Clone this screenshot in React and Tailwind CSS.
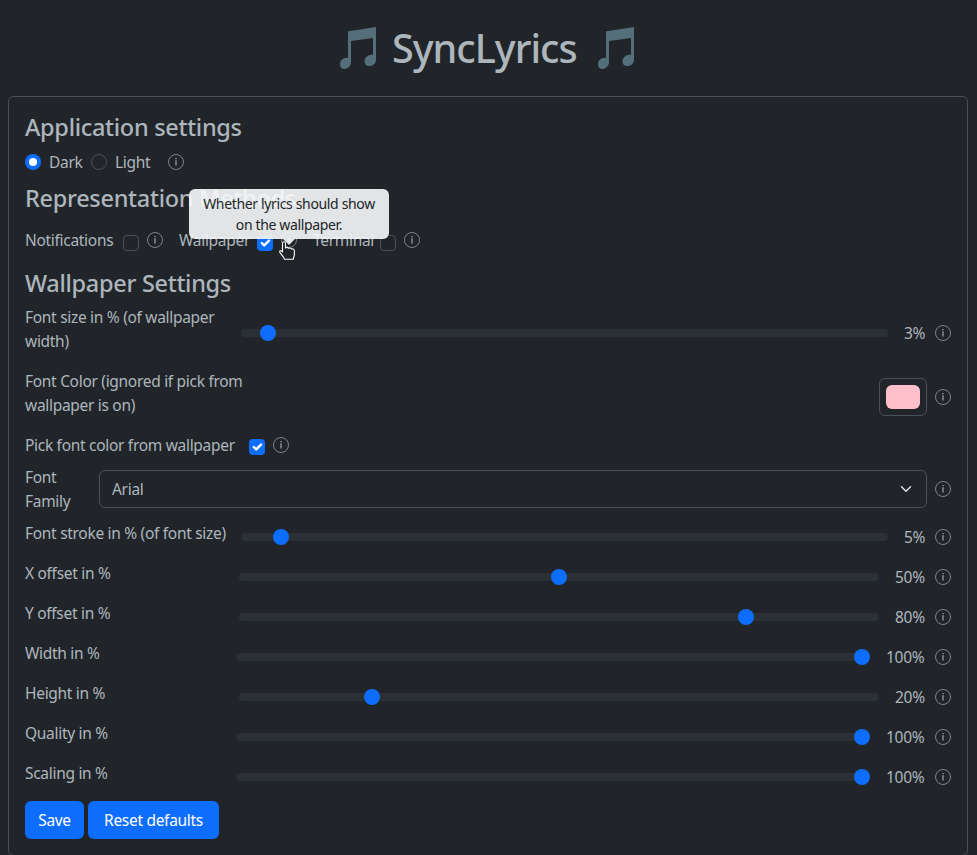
const NOTE = "M7 4.5 L36 0 V32.5 C36 37 32 39.5 29 39 C26 39 24.5 37 24.5 34.5 C24.5 30 29 27 33 28 V11 L11 14 V35 C11 39.5 7 42 4.5 42 C1.5 42 0 40 0 37.5 C0 33 4 30 8 31 V4.5 Z";

function Note({ className = "" }) {
  return (
    <svg className={`shrink-0 ${className}`} width="36" height="42" viewBox="0 0 36 42" fill="#546e7a">
      <path d={NOTE} />
    </svg>
  );
}

function Info({ className = "" }) {
  return (
    <svg className={`size-4 shrink-0 ${className}`} viewBox="0 0 16 16" fill="none" stroke="#adb5bd">
      <circle cx="8" cy="8" r="7.5" strokeWidth="0.65" />
      <path d="M8 6.2V11.6" strokeWidth="1.1" />
      <path d="M8 4.1V5.3" strokeWidth="1.1" />
    </svg>
  );
}

function Check({ on = false, className = "" }) {
  return on ? (
    <span className={`size-4 shrink-0 rounded bg-[#0d6efd] ${className}`}>
      <svg viewBox="0 0 20 20" className="size-4" fill="none" stroke="#fff" strokeWidth="3" strokeLinecap="round" strokeLinejoin="round">
        <path d="m6 10 3 3 6-6" />
      </svg>
    </span>
  ) : (
    <span className={`size-4 shrink-0 rounded border border-[#495057] ${className}`} />
  );
}

function Heading({ children, className = "" }) {
  return <h4 className={`h-[29px] whitespace-nowrap text-[23.5px] leading-[29px] font-medium ${className}`}>{children}</h4>;
}

function Slider({ percent }) {
  return (
    <div className="flex h-4 min-w-0 flex-1 items-center rounded-full">
      <div className="flex h-2 w-full items-center rounded-full bg-[#2b3035] pr-4">
        <div className="h-4 w-full">
          <div className="size-4 rounded-full bg-[#0d6efd]" style={{ marginLeft: `${percent}%` }} />
        </div>
      </div>
    </div>
  );
}

function SliderRow({ label, percent, labelWidth, valueWidth, track, tall = false }) {
  return (
    <div className={`mb-2 flex items-center ${tall ? "h-14" : "h-8"}`}>
      <label className={`self-start whitespace-pre ${labelWidth} ${track}`}>{label}</label>
      <Slider percent={percent} />
      <span className={`ml-4 whitespace-nowrap tracking-[-0.3px] ${valueWidth}`}>{percent}%</span>
      <Info className="ml-2" />
    </div>
  );
}

function Tooltip() {
  return (
    <div className="absolute bottom-[9px] left-1/2 z-10 flex w-[200px] -translate-x-1/2 flex-col items-center opacity-90">
      <div className="h-[50px] w-full rounded-md bg-[#f8f9fa] py-1 text-center text-[14px] leading-[21px] whitespace-nowrap text-[#212529]">
        <div className="tracking-[-0.35px]">Whether lyrics should show</div>
        <div className="tracking-[-0.35px]">on the wallpaper.</div>
      </div>
      <div className="-mb-[6px] h-[6px] w-3 bg-[#f8f9fa] [clip-path:polygon(0_0,100%_0,50%_100%)]" />
    </div>
  );
}

function Pointer() {
  return (
    <svg className="absolute top-[9px] left-[-2px] z-20" width="16" height="19" viewBox="0 0 16 19">
      <path
        d="M3.5 11V2.2C3.5 .2 6.5 .2 6.5 2.2V7C7.5 6 9 6.3 9.5 7.3C10.5 6.6 12 7 12.4 8C14 7.5 15.4 8.2 15.4 9.8V13.5C15.4 15 14.4 15.8 14.4 18.3H5.5C5 16 2.5 14 1 11.6C0 9.8 2 9 3.5 11Z"
        fill="#212529" stroke="#fff" strokeWidth="1.1" strokeLinejoin="round"
      />
    </svg>
  );
}

export default function App() {
  return (
    <div className="h-screen overflow-hidden bg-[#212529] px-2 pt-6 font-['Noto_Sans','Open_Sans',sans-serif] text-[15.5px] leading-6 text-[#adb5bd]">
      <h1 className="mb-6 flex h-12 w-[960px] items-center pl-[332px] text-[39.5px] leading-[48px] font-medium">
        <Note />
        <span className="ml-[16px] w-[206px] whitespace-nowrap tracking-[-1px]">SyncLyrics</span>
        <Note />
      </h1>

      <div className="h-[760px] w-[960px] rounded-md border border-[#495057] p-4">
        <Heading className="tracking-[-0.3px]">Application settings</Heading>
        <div className="mt-2 flex h-6 items-center">
          <span className="flex size-4 items-center justify-center rounded-full bg-[#0d6efd]">
            <span className="size-2 rounded-full bg-white" />
          </span>
          <span className="ml-2 w-[42px] tracking-[-0.3px]">Dark</span>
          <span className="size-4 rounded-full border border-[#495057]" />
          <span className="ml-2 w-[53px] tracking-[-0.3px]">Light</span>
          <Info />
        </div>

        <Heading className="mt-[10px] tracking-[-0.3px]">Representation Methods</Heading>
        <div className="mt-[15px] flex h-6 items-center">
          <span className="w-[98px] tracking-[-0.3px]">Notifications</span>
          <Check className="mt-[6px]" />
          <Info className="ml-2" />
          <span className="ml-4 w-[78px] tracking-[-0.3px]">Wallpaper</span>
          <Check on className="mt-[6px]" />
          <span className="relative ml-2 size-4">
            <Info />
            <Tooltip />
            <Pointer />
          </span>
          <span className="ml-4 w-[67px] tracking-[-0.3px]">Terminal</span>
          <Check className="mt-[6px]" />
          <Info className="ml-2" />
        </div>

        <Heading className="mt-[17px] mb-[7px] tracking-[-0.3px]">Wallpaper Settings</Heading>
        <SliderRow tall label={"Font size in % (of wallpaper\nwidth)"} percent={3} labelWidth="w-[216px]" valueWidth="w-[23px]" track="tracking-[-0.3px]" />

        <div className="mb-2 flex h-14 items-center">
          <label className="flex-1 self-start whitespace-pre tracking-[-0.3px]">{"Font Color (ignored if pick from\nwallpaper is on)"}</label>
          <span className="h-[38px] w-12 rounded-md border border-[#495057] px-1.5 py-1.5">
            <span className="block h-6 w-[34px] rounded-md bg-[#ffc0cb]" />
          </span>
          <Info className="ml-2" />
        </div>

        <div className="mb-2 flex h-6 items-center">
          <span className="w-[224px] whitespace-nowrap tracking-[-0.3px]">Pick font color from wallpaper</span>
          <Check on className="mt-[4px]" />
          <Info className="ml-2" />
        </div>

        <div className="mb-2 flex h-12 items-center">
          <label className="w-[74px] whitespace-pre tracking-[-0.3px]">{"Font\nFamily"}</label>
          <div className="flex h-[38px] flex-1 items-center justify-between rounded-md border border-[#495057] pr-3 pl-3">
            <span className="tracking-[-0.3px]">Arial</span>
            <svg viewBox="0 0 16 16" className="h-3 w-4" fill="none" stroke="#dee2e6" strokeWidth="2" strokeLinecap="round" strokeLinejoin="round">
              <path d="m2 5 6 6 6-6" />
            </svg>
          </div>
          <Info className="ml-2" />
        </div>

        <SliderRow label="Font stroke in % (of font size)" percent={5} labelWidth="w-[216px]" valueWidth="w-[23px]" track="tracking-[-0.3px]" />
        <SliderRow label="X offset in %" percent={50} labelWidth="w-[214px]" valueWidth="w-[32px]" track="tracking-[-0.3px]" />
        <SliderRow label="Y offset in %" percent={80} labelWidth="w-[214px]" valueWidth="w-[32px]" track="tracking-[-0.3px]" />
        <SliderRow label="Width in %" percent={100} labelWidth="w-[211px]" valueWidth="w-[41px]" track="tracking-[-0.3px]" />
        <SliderRow label="Height in %" percent={20} labelWidth="w-[214px]" valueWidth="w-[32px]" track="tracking-[-0.3px]" />
        <SliderRow label="Quality in %" percent={100} labelWidth="w-[211px]" valueWidth="w-[41px]" track="tracking-[-0.3px]" />
        <SliderRow label="Scaling in %" percent={100} labelWidth="w-[211px]" valueWidth="w-[41px]" track="tracking-[-0.3px]" />

        <div className="flex gap-1 text-white">
          <button className="h-[38px] w-[59px] rounded-md bg-[#0d6efd] tracking-[-0.3px]">Save</button>
          <button className="h-[38px] w-[131px] rounded-md bg-[#0d6efd] whitespace-nowrap tracking-[-0.3px]">Reset defaults</button>
        </div>
      </div>
    </div>
  );
}
